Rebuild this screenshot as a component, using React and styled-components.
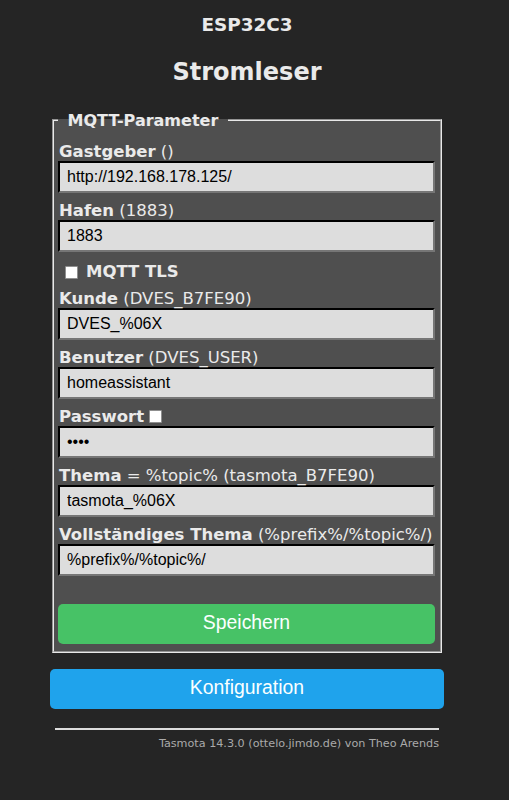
import React from 'react';
import styled, { createGlobalStyle } from 'styled-components';

const GlobalStyle = createGlobalStyle`
  html, body {
    margin: 0;
    padding: 0;
    background: #252525;
  }
  body {
    font-family: "DejaVu Sans", Verdana, sans-serif;
    color: #eaeaea;
  }
`;

const fields = [
  { key: 'host', label: 'Gastgeber', hint: '()', value: 'http://192.168.178.125/' },
  { key: 'port', label: 'Hafen', hint: '(1883)', value: '1883' },
  { key: 'tls', checkbox: 'MQTT TLS' },
  { key: 'client', label: 'Kunde', hint: '(DVES_B7FE90)', value: 'DVES_%06X' },
  { key: 'user', label: 'Benutzer', hint: '(DVES_USER)', value: 'homeassistant' },
  { key: 'pass', label: 'Passwort', toggle: true, value: '****', type: 'password' },
  { key: 'topic', label: 'Thema', hint: '= %topic% (tasmota_B7FE90)', value: 'tasmota_%06X' },
  { key: 'full', label: 'Vollständiges Thema', hint: '(%prefix%/%topic%/)', value: '%prefix%/%topic%/' }
];

const App = () => (
  <Page>
    <GlobalStyle />
    <Header>
      <DeviceName>ESP32C3</DeviceName>
      <FriendlyName>Stromleser</FriendlyName>
    </Header>
    <Container>
      <Fieldset>
        <Legend>&nbsp;MQTT-Parameter&nbsp;</Legend>
        {fields.map(field =>
          field.checkbox ? (
            <CheckRow key={field.key}>
              <Check type="checkbox" />
              <b>{field.checkbox}</b>
            </CheckRow>
          ) : (
            <Field key={field.key}>
              <Label>
                <b>{field.label}</b>
                {field.hint && <Hint> {field.hint}</Hint>}
                {field.toggle && (
                  <>
                    {' '}
                    <Check type="checkbox" inline />
                  </>
                )}
              </Label>
              <Input type={field.type || 'text'} defaultValue={field.value} />
            </Field>
          )
        )}
        <Button color="#47c266" inset>
          Speichern
        </Button>
      </Fieldset>
      <Button color="#1fa3ec">Konfiguration</Button>
      <Rule />
      <Footer>Tasmota 14.3.0 (ottelo.jimdo.de) von Theo Arends</Footer>
    </Container>
  </Page>
);

const Page = styled.div`
  width: 494px;
  text-align: center;
  padding-bottom: 40px;
`;

const Header = styled.div`
  padding-top: 14px;
`;

const DeviceName = styled.h3`
  margin: 0;
  font-size: 18.4px;
  line-height: 22px;
  font-weight: bold;
`;

const FriendlyName = styled.h2`
  margin: 22px 0 0;
  font-size: 24px;
  line-height: 28px;
  font-weight: bold;
`;

const Container = styled.div`
  width: 394px;
  margin: 0 auto;
  text-align: left;
  display: flex;
  flex-direction: column;
`;

const Fieldset = styled.fieldset`
  margin: 25px 2px 0;
  padding: 0 5px 5px 4px;
  background: #4f4f4f;
  border: 2px groove #e8e8e8;
  min-width: 0;
`;

const Legend = styled.legend`
  padding: 0 4px;
  font-weight: bold;
  font-size: 16px;
  line-height: 18px;
  transform: translateY(1px);
`;

const Field = styled.div`
  margin-top: 9px;

  &:first-of-type {
    margin-top: 14px;
  }
`;

const Label = styled.div`
  padding-left: 1px;
  font-size: 16.5px;
  line-height: 18px;
  white-space: nowrap;
`;

const Hint = styled.span`
  font-weight: normal;
`;

const Input = styled.input`
  display: block;
  width: 100%;
  box-sizing: border-box;
  height: 32px;
  margin: 0;
  padding: 5px 7px;
  border: 2px inset;
  border-color: #262626 #767676 #767676 #262626;
  background: #dddddd;
  color: #000;
  font-family: "Liberation Sans", Arial, sans-serif;
  font-size: 16px;
  outline: none;
`;

const CheckRow = styled.div`
  display: flex;
  align-items: center;
  gap: 8px;
  margin-top: 11px;
  padding-left: 7px;
  font-size: 16.5px;
  line-height: 18px;
`;

const Check = styled.input`
  appearance: none;
  width: 13px;
  height: 13px;
  margin: 0;
  background: #fff;
  border: 1px solid #8f8f8f;
  border-radius: 1px;
  vertical-align: ${({ inline }) => (inline ? '-1px' : 'middle')};
`;

const Button = styled.button`
  display: block;
  width: 100%;
  height: 40px;
  margin: ${({ inset }) => (inset ? '28px 0 2px' : '16px 0 0')};
  padding: 0 0 3px;
  border: 0;
  border-radius: 5px;
  background: ${({ color }) => color};
  color: #faffff;
  font-family: "Liberation Sans", Arial, sans-serif;
  font-size: 19.4px;
  line-height: 37px;
  cursor: pointer;
`;

const Rule = styled.hr`
  width: 384px;
  height: 2px;
  margin: 19px auto 0;
  border: 0;
  background: #dddddd;
`;

const Footer = styled.div`
  margin-top: 7px;
  padding-right: 5px;
  text-align: right;
  font-size: 11.2px;
  line-height: 14px;
  color: #aaaaaa;
`;

export default App;
